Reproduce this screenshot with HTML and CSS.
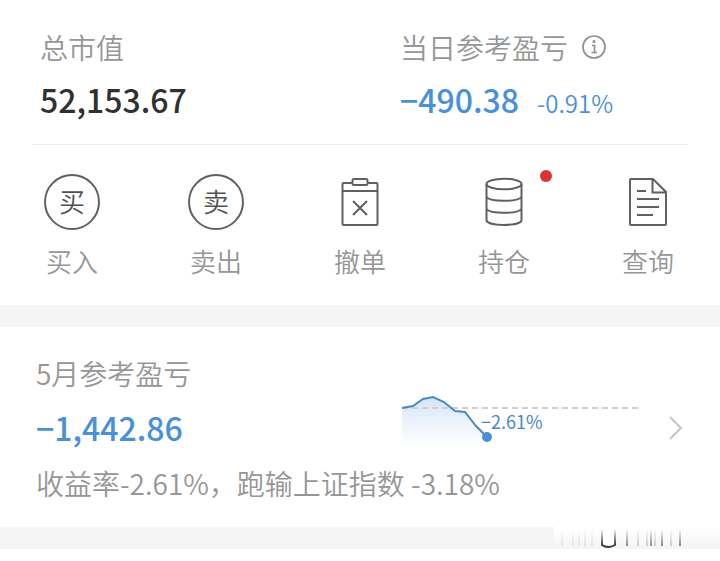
FILE: index.html
```
<!DOCTYPE html>
<html lang="zh-CN">
<head>
    <meta charset="UTF-8">
    <meta name="viewport" content="width=device-width, initial-scale=1.0">
    <title>持仓概览</title>
    <link rel="stylesheet" href="styles.css">
</head>
<body>
    <section class="account">
        <div class="summary">
            <div class="summary-item">
                <div class="label">总市值</div>
                <div class="amount">52,153.67</div>
            </div>
            <div class="summary-item">
                <div class="label">当日参考盈亏
                    <button class="info" aria-label="说明">
                        <svg width="26" height="26" viewBox="0 0 26 26" fill="none" stroke="#8f8f8f" stroke-width="1.700">
                            <circle cx="13" cy="13" r="11"/>
                            <path d="M11 11.500H13.500V18M10.500 18.500H16"/>
                            <circle cx="13" cy="7.500" r="1.500" fill="#8f8f8f" stroke="none"/>
                        </svg>
                    </button>
                </div>
                <div class="amount down">−490.38<span class="rate">-0.91%</span></div>
            </div>
        </div>
        <nav class="actions">
            <a href="#buy" class="action">
                <span class="round-icon">买</span>
                <span>买入</span>
            </a>
            <a href="#sell" class="action">
                <span class="round-icon">卖</span>
                <span>卖出</span>
            </a>
            <a href="#cancel" class="action">
                <svg class="icon" viewBox="0 0 56 56">
                    <path d="M20 9H11.500Q10.500 9 10.500 10V50Q10.500 51 11.500 51H44.500Q45.500 51 45.500 50V10Q45.500 9 44.500 9H36M10.500 17H45.500"/>
                    <rect x="20.500" y="5" width="15" height="6" rx="1.500"/>
                    <path d="M21 27L35 41M35 27L21 41"/>
                </svg>
                <span>撤单</span>
            </a>
            <a href="#position" class="action">
                <svg class="icon" viewBox="0 0 56 56">
                    <ellipse cx="28" cy="10" rx="17.500" ry="5.300"/>
                    <path d="M10.500 10V46C10.500 52.500 45.500 52.500 45.500 46V10M10.500 23C14 28 42 28 45.500 23M10.500 35C14 40 42 40 45.500 35"/>
                </svg>
                <span>持仓</span>
                <i class="dot"></i>
            </a>
            <a href="#query" class="action">
                <svg class="icon" viewBox="0 0 56 56">
                    <path d="M11 5H33L46 18V50Q46 51 45 51H11Q10 51 10 50V6Q10 5 11 5ZM32.500 5V18.500H46M17 17H26M17 25H39M17 33H39M17 41H33"/>
                </svg>
                <span>查询</span>
            </a>
        </nav>
    </section>

    <a href="#month" class="month">
        <div class="month-text">
            <div class="label">5月参考盈亏</div>
            <div class="amount down">−1,442.86</div>
        </div>
        <svg class="chart" width="240" height="60" viewBox="0 0 240 60">
            <defs>
                <linearGradient id="fade" x1="0" y1="0" x2="0" y2="1">
                    <stop offset="0" stop-color="#d5e4f8"/>
                    <stop offset="1" stop-color="#ffffff"/>
                </linearGradient>
            </defs>
            <path d="M2 20L13 18L23 11L33 9L44 14L55 23L65 24L76 38L87 49V57H2Z" fill="url(#fade)"/>
            <path d="M2 20H238" stroke="#cfcfcf" stroke-width="2" stroke-dasharray="6 4"/>
            <path d="M2 20L13 18L23 11L33 9L44 14L55 23L65 24L76 38L87 49" fill="none" stroke="#4a88c4" stroke-width="2"/>
            <circle cx="87" cy="49" r="5" fill="#4a90d9"/>
            <text x="81" y="41">−2.61%</text>
        </svg>
        <svg class="arrow" width="16" height="26" viewBox="0 0 16 26" fill="none" stroke="#c4c4c4" stroke-width="2">
            <path d="M2 2L13 13L2 24"/>
        </svg>
        <p class="note">收益率-2.61%，跑输上证指数 -3.18%</p>
    </a>

    <footer class="bottom">
        <!-- faded mark at the right end of the bar -->
        <svg width="166" height="30" viewBox="0 0 166 30">
            <defs>
                <linearGradient id="veil" x1="0" y1="0" x2="0" y2="1">
                    <stop offset="0.300" stop-color="#ffffff"/>
                    <stop offset="1" stop-color="#ffffff" stop-opacity="0"/>
                </linearGradient>
            </defs>
            <path d="M8 6V25M19 6V25M25 6V25M31 6V25M38 6V25" stroke="#e2e2e2" stroke-width="2"/>
            <path d="M84 6V25M93 6V25M101 6V25M117 6V25" stroke="#cccccc" stroke-width="2"/>
            <path d="M73 6V25M97 6V25M108 6V25M126 6V25" stroke="#888888" stroke-width="2"/>
            <path d="M48 6V24Q54 28 61 24V6" fill="#ffffff" stroke="#333333" stroke-width="2"/>
            <rect width="166" height="25" fill="url(#veil)"/>
        </svg>
    </footer>
</body>
</html>
```

FILE: styles.css
```
* {
    box-sizing: border-box;
}
body {
    margin: 0;
    background-color: #fff;
    color: #969696;
    font-family: "Noto Sans CJK SC", sans-serif;
    font-weight: 350;
}
a {
    color: inherit;
    text-decoration: none;
}
.account {
    padding-top: 27px;
    border-bottom: 22px solid #f5f5f5;
}
.summary {
    display: grid;
    grid-template-columns: 1fr 1fr;
    margin: 0 32px;
    padding: 0 8px 21px;
    border-bottom: 1px solid #ebebeb;
}
.summary-item:last-child {
    padding-left: 40px;
}
.label {
    display: flex;
    align-items: center;
    height: 40px;
    font-size: 28px;
    line-height: 40px;
    white-space: nowrap;
}
.info {
    display: flex;
    margin-left: 13px;
    padding: 0;
    border: none;
    background: none;
}
.amount {
    margin-top: 8px;
    font-size: 32px;
    font-weight: 500;
    line-height: 48px;
    height: 48px;
    color: #303030;
    white-space: nowrap;
}
.down {
    color: #4a90d9;
}
.rate {
    margin-left: 18px;
    font-size: 24px;
    font-weight: 350;
}
.actions {
    display: grid;
    grid-template-columns: repeat(5, 1fr);
    padding: 29px 0 26px;
}
.action {
    position: relative;
    display: flex;
    flex-direction: column;
    align-items: center;
    gap: 12px;
    font-size: 26px;
    line-height: 37px;
}
.round-icon {
    width: 56px;
    height: 56px;
    border: 2px solid #606060;
    border-radius: 50%;
    color: #505050;
    line-height: 50px;
    text-align: center;
}
.icon {
    width: 56px;
    height: 56px;
    fill: none;
    stroke: #606060;
    stroke-width: 2;
}
.dot {
    position: absolute;
    top: -4px;
    left: calc(50% + 36px);
    width: 12px;
    height: 12px;
    border-radius: 50%;
    background-color: #dc3232;
}
.month {
    display: grid;
    grid-template-columns: 1fr 240px 16px;
    column-gap: 28px;
    padding: 26px 36px 24px;
    border-bottom: 22px solid #f5f5f5;
}
.month-text .amount {
    margin-top: 10px;
}
.chart {
    margin-top: 35px;
}
.chart text {
    fill: #4a88c4;
    font-size: 18px;
    font-weight: 400;
}
.arrow {
    margin-top: 62px;
}
.note {
    grid-column: 1 / -1;
    margin: 12px 0 0;
    font-size: 28px;
    line-height: 40px;
    white-space: nowrap;
}
.bottom {
    display: flex;
    justify-content: flex-end;
    margin-top: -28px;
}
```
